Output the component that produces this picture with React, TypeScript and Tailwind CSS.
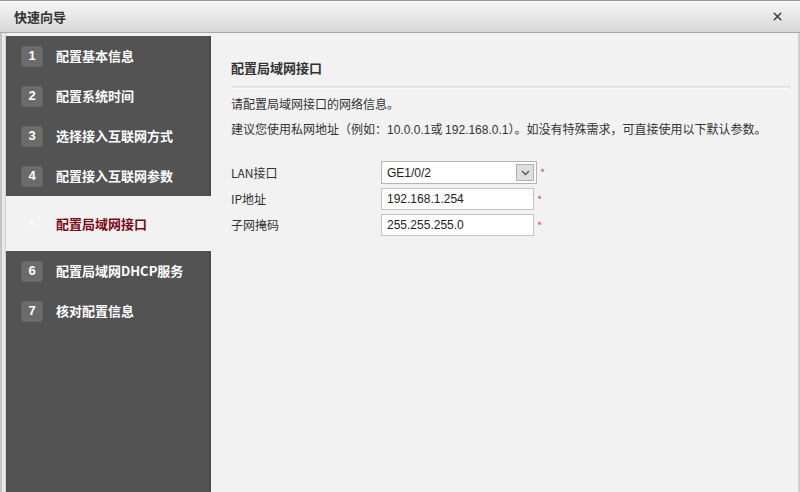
import { X } from "lucide-react";

const steps = [
  { n: 1, label: "配置基本信息" },
  { n: 2, label: "配置系统时间" },
  { n: 3, label: "选择接入互联网方式" },
  { n: 4, label: "配置接入互联网参数" },
  { n: 5, label: "配置局域网接口", active: true },
  { n: 6, label: "配置局域网DHCP服务" },
  { n: 7, label: "核对配置信息" },
];

const cjk = "font-['Noto_Sans_CJK_SC','Microsoft_YaHei',sans-serif]";

const Star = () => <span className="text-[#e0505a] text-[11px] ml-[3px] leading-none">*</span>;

export default function App() {
  return (
    <div className={`w-[800px] h-[492px] flex flex-col bg-[#f2f2f2] border-t border-[#9a9a9a] overflow-hidden ${cjk}`}>
      <div className="h-[32px] shrink-0 flex items-center justify-between pl-[14px] pr-[16px] bg-gradient-to-b from-[#f7f7f7] to-[#d7d7d7] border-b border-[#a8a8a8]">
        <span className="text-[13px] font-bold text-[#333]">快速向导</span>
        <X size={13} strokeWidth={3} className="text-[#444]" />
      </div>
      <div className="flex flex-1 min-h-0">
        <div className="w-[6px] shrink-0 border-l-2 border-[#c4c4c4] bg-[#e9e9e9] border-r border-r-[#d0d0d0]" />
        <div className="w-[205px] shrink-0 bg-[#535353] border-r-2 border-[#4a4a4a] mt-[3px]">
          {steps.map((s) =>
            s.active ? (
              <div key={s.n} className="h-[55px] bg-[#f2f2f2] flex items-center pl-[15px] -mr-[2px]">
                <span className="w-[22px] h-[21px] rounded-[3px] flex items-center justify-center text-[13px] font-bold text-[#f7f7f7] font-['Liberation_Sans',sans-serif]">
                  {s.n}
                </span>
                <span className="ml-[13px] text-[13px] font-bold text-[#7b0a17]">{s.label}</span>
              </div>
            ) : (
              <div key={s.n} className="h-[40px] flex items-center pl-[15px]">
                <span className="w-[22px] h-[21px] rounded-[3px] bg-[#6b6b6b] flex items-center justify-center text-[13px] font-bold text-white font-['Liberation_Sans',sans-serif] shadow-[inset_0_0_1px_rgba(0,0,0,0.4)]">
                  {s.n}
                </span>
                <span className="ml-[13px] text-[13px] font-bold text-white">{s.label}</span>
              </div>
            )
          )}
        </div>
        <div className="flex-1 pl-[20px] pr-[8px] border-r-2 border-[#cfcfcf]">
          <div className="mt-[26px] text-[13px] font-bold text-[#333] leading-[18px]">配置局域网接口</div>
          <div className="mt-[9px] h-[3px] border-t border-[#dcdcdc] border-b border-b-[#fafafa] bg-[#e8e8e8]" />
          <div className="mt-[6px] text-[12px] text-[#333] leading-[18px]">请配置局域网接口的网络信息。</div>
          <div className="mt-[7px] text-[12px] text-[#333] leading-[18px]">
            建议您使用私网地址（例如：<span className="font-['Liberation_Sans',sans-serif]">10.0.0.1</span>或 <span className="font-['Liberation_Sans',sans-serif]">192.168.0.1</span>）。如没有特殊需求，可直接使用以下默认参数。
          </div>
          <div className="mt-[22px] flex flex-col text-[12px] text-[#333]">
            <div className="flex items-center h-[23px]">
              <span className="w-[150px]">LAN接口</span>
              <div className="w-[156px] h-[23px] bg-white border border-[#b5b5b5] flex items-center justify-between pl-[5px] pr-[2px]">
                <span className="text-[12px] font-['Liberation_Sans',sans-serif] text-[#222]">GE1/0/2</span>
                <span className="w-[18px] h-[17px] bg-[#dedede] border border-[#b0b0b0] flex items-center justify-center">
                  <svg width="9" height="6" viewBox="0 0 9 6">
                    <path d="M1 1 L4.5 4.5 L8 1" fill="none" stroke="#555" strokeWidth="1.3" />
                  </svg>
                </span>
              </div>
              <Star />
            </div>
            <div className="flex items-center h-[22px] mt-[4px]">
              <span className="w-[150px]">IP地址</span>
              <div className="w-[153px] h-[22px] bg-white border border-[#c4c4c4] flex items-center pl-[5px] font-['Liberation_Sans',sans-serif] text-[#222]">
                192.168.1.254
              </div>
              <Star />
            </div>
            <div className="flex items-center h-[22px] mt-[4px]">
              <span className="w-[150px]">子网掩码</span>
              <div className="w-[153px] h-[22px] bg-white border border-[#c4c4c4] flex items-center pl-[5px] font-['Liberation_Sans',sans-serif] text-[#222]">
                255.255.255.0
              </div>
              <Star />
            </div>
          </div>
        </div>
      </div>
    </div>
  );
}
